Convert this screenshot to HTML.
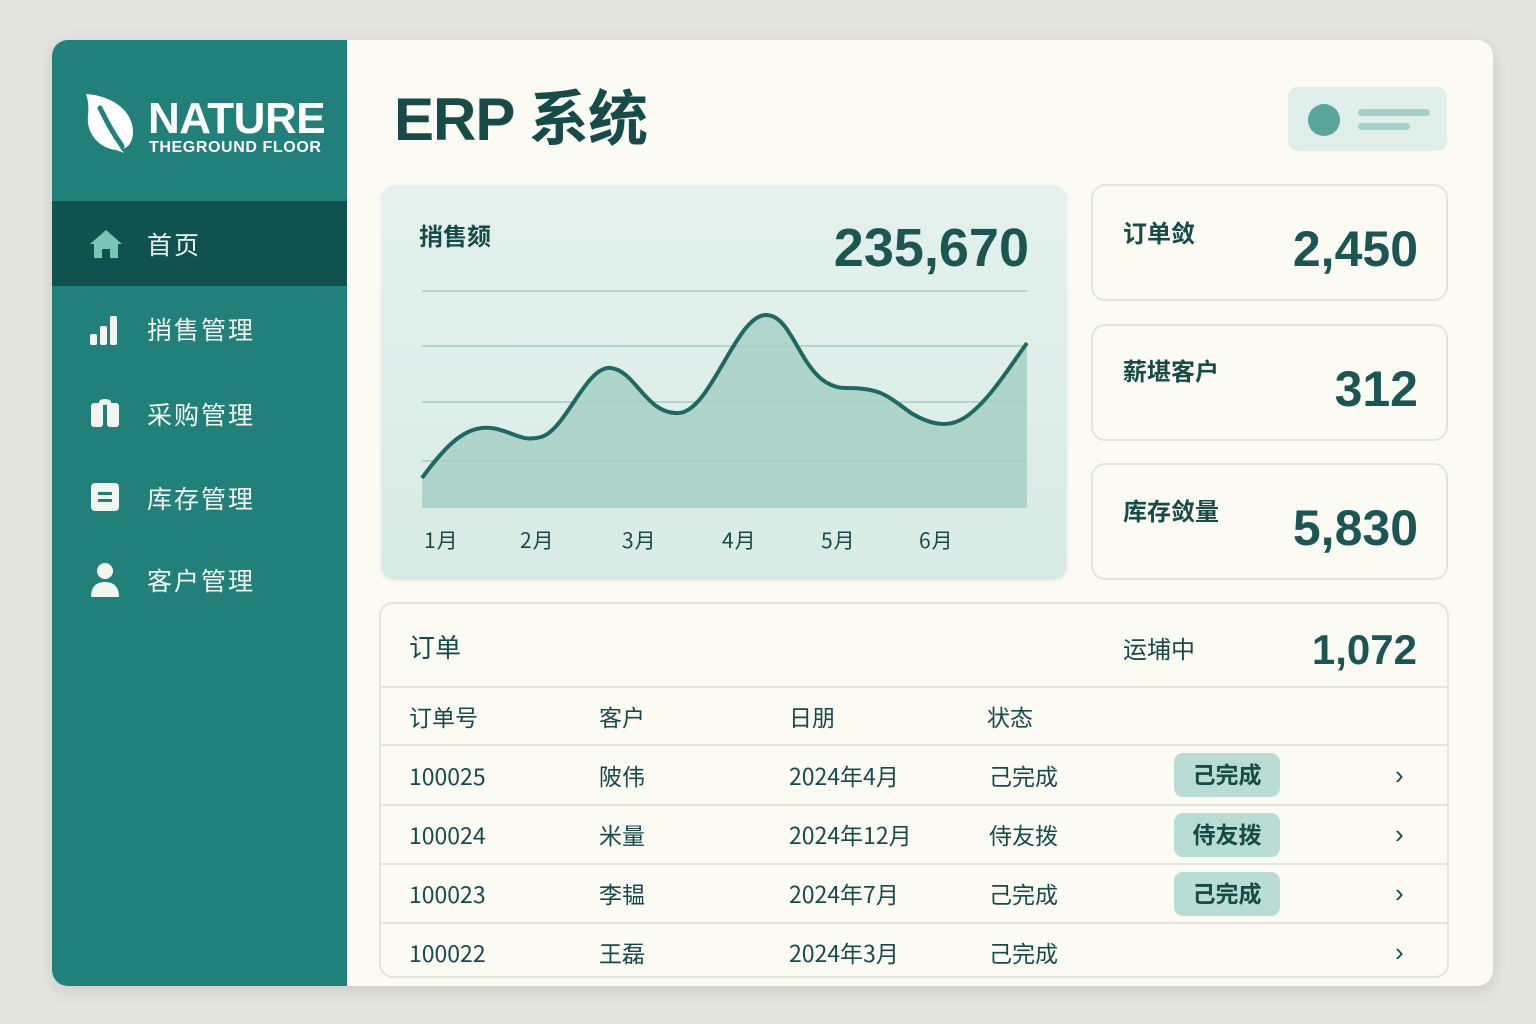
<!DOCTYPE html>
<html><head><meta charset="utf-8">
<style>
*{margin:0;padding:0;box-sizing:border-box}
body{width:1536px;height:1024px;background:#e5e5df;font-family:"Liberation Sans","Noto Sans CJK SC",sans-serif;position:relative;overflow:hidden;color:#174b48}
.abs{position:absolute}
.win{left:52px;top:40px;width:1441px;height:946px;background:#fbfbf4;border-radius:16px;overflow:hidden;box-shadow:0 4px 16px rgba(0,0,0,.12)}
.side{left:0;top:0;width:295px;height:946px;background:#22807a}
.act{left:0;top:161px;width:295px;height:85px;background:#10524f}
.nav{left:95px;font-size:25px;color:#f3f5ef;letter-spacing:2px}
.card{background:#fbfbf4;border:2px solid #e3e6de;border-radius:14px}
.lbl{font-size:24px;font-weight:bold;color:#174b48}
.big{font-weight:bold;color:#1c5653}
.td{font-size:23px;color:#174b48;font-family:"Noto Sans CJK SC",sans-serif;line-height:30px}
.line{height:2px;background:#e4e7df;left:0;width:1068px}
.badge{width:106px;height:44px;background:#b9dcd5;border-radius:9px;font-size:23px;text-align:center;line-height:44px;font-weight:bold;color:#174b48}
.chev{font-size:26px;color:#174b48}
</style></head><body>
<div class="abs win">
  <div class="abs side">
    <svg class="abs" style="left:32px;top:52px" width="52" height="62" viewBox="0 0 52 62">
      <path d="M2 2 C30 4 50 20 49 42 C48 52 42 58 36 56 L40 61 L32 58 C14 56 2 40 4 24 C5 14 4 8 2 2Z" fill="#fff"/>
      <path d="M16 16 C22 28 28 40 38 54" stroke="#22807a" stroke-width="5" fill="none" stroke-linecap="round"/>
    </svg>
    <div class="abs" style="left:96px;top:54px;font-size:44px;font-weight:bold;color:#fff;letter-spacing:-0.5px">NATURE</div>
    <div class="abs" style="left:97px;top:99px;font-size:16px;font-weight:bold;color:#fff;letter-spacing:0.6px">THEGROUND FLOOR</div>
    <div class="abs act"></div>
    <svg class="abs" style="left:36px;top:188px" width="36" height="32" viewBox="0 0 36 32"><path d="M18 2 L34 16 L30 16 L30 30 L22 30 L22 21 L14 21 L14 30 L6 30 L6 16 L2 16Z" fill="#7cc4b4"/></svg>
    <div class="abs nav" style="top:186px">首页</div>
    <svg class="abs" style="left:37px;top:274px" width="30" height="32" viewBox="0 0 30 32"><rect x="1" y="20" width="7" height="11" rx="2" fill="#f3f5ef"/><rect x="11" y="12" width="7" height="19" rx="2" fill="#f3f5ef"/><rect x="21" y="2" width="7" height="29" rx="2" fill="#f3f5ef"/></svg>
    <div class="abs nav" style="top:271px">捎售管理</div>
    <svg class="abs" style="left:38px;top:358px" width="30" height="30" viewBox="0 0 30 30"><rect x="1" y="5" width="12" height="24" rx="3" fill="#f3f5ef"/><rect x="17" y="5" width="12" height="24" rx="3" fill="#f3f5ef"/><ellipse cx="15" cy="4" rx="6" ry="3" fill="#f3f5ef"/></svg>
    <div class="abs nav" style="top:356px">采购管理</div>
    <svg class="abs" style="left:38px;top:442px" width="30" height="30" viewBox="0 0 30 30"><rect x="1" y="1" width="28" height="28" rx="4" fill="#f3f5ef"/><rect x="8" y="10" width="14" height="3" fill="#22807a"/><rect x="8" y="17" width="14" height="3" fill="#22807a"/></svg>
    <div class="abs nav" style="top:440px">库存管理</div>
    <svg class="abs" style="left:38px;top:522px" width="30" height="36" viewBox="0 0 30 36"><circle cx="15" cy="9" r="8" fill="#f3f5ef"/><path d="M1 35 C1 24 7 20 15 20 C23 20 29 24 29 35Z" fill="#f3f5ef"/></svg>
    <div class="abs nav" style="top:522px">客户管理</div>
  </div>

  <div class="abs" style="left:342px;top:40px;font-size:60px;font-weight:bold;color:#174b48;letter-spacing:-1px;line-height:80px">ERP 系统</div>
  <div class="abs" style="left:1236px;top:47px;width:159px;height:64px;background:#e0efea;border-radius:10px">
    <div class="abs" style="left:20px;top:17px;width:32px;height:32px;border-radius:50%;background:#5aa69c"></div>
    <div class="abs" style="left:70px;top:22px;width:72px;height:7px;border-radius:4px;background:#a3d3c8"></div>
    <div class="abs" style="left:70px;top:36px;width:52px;height:7px;border-radius:4px;background:#a3d3c8"></div>
  </div>

  <div class="abs" style="left:329px;top:145px;width:686px;height:395px;border-radius:14px;background:linear-gradient(#e4f1ed,#d9ebe5);box-shadow:0 1px 4px rgba(0,0,0,.06)">
    <div class="abs lbl" style="left:38px;top:32px">捎售颏</div>
    <div class="abs big" style="right:38px;top:32px;font-size:54px">235,670</div>
    <svg class="abs" style="left:0;top:0" width="686" height="395" viewBox="0 0 686 395">
      <g stroke="#a9cbc4" stroke-width="1.5"><line x1="41" y1="106" x2="646" y2="106"/><line x1="41" y1="161" x2="646" y2="161"/><line x1="41" y1="217" x2="646" y2="217"/><line x1="41" y1="276" x2="646" y2="276"/></g>
      <path d="M41 293 C65 260 85 240 110 243 C130 245 140 258 160 252 C185 245 205 180 230 183 C255 186 265 230 298 228 C330 226 355 130 385 130 C415 130 420 203 465 203 C500 203 505 210 530 228 C550 240 570 245 590 228 C610 212 630 180 646 158 L646 323 L41 323Z" fill="#a7d0c6" opacity=".85"/>
      <path d="M41 293 C65 260 85 240 110 243 C130 245 140 258 160 252 C185 245 205 180 230 183 C255 186 265 230 298 228 C330 226 355 130 385 130 C415 130 420 203 465 203 C500 203 505 210 530 228 C550 240 570 245 590 228 C610 212 630 180 646 158" stroke="#1f6964" stroke-width="4" fill="none"/>
    </svg>
    <div class="abs td" style="left:43px;top:340px;font-size:21px;letter-spacing:1px">1月</div>
    <div class="abs td" style="left:139px;top:340px;font-size:21px;letter-spacing:1px">2月</div>
    <div class="abs td" style="left:241px;top:340px;font-size:21px;letter-spacing:1px">3月</div>
    <div class="abs td" style="left:341px;top:340px;font-size:21px;letter-spacing:1px">4月</div>
    <div class="abs td" style="left:440px;top:340px;font-size:21px;letter-spacing:1px">5月</div>
    <div class="abs td" style="left:538px;top:340px;font-size:21px;letter-spacing:1px">6月</div>
  </div>

  <div class="abs card" style="left:1039px;top:144px;width:357px;height:117px">
    <div class="abs lbl" style="left:30px;top:28px">订单敛</div>
    <div class="abs big" style="right:28px;top:34px;font-size:50px">2,450</div>
  </div>
  <div class="abs card" style="left:1039px;top:284px;width:357px;height:117px">
    <div class="abs lbl" style="left:30px;top:26px">薪堪客户</div>
    <div class="abs big" style="right:28px;top:34px;font-size:50px">312</div>
  </div>
  <div class="abs card" style="left:1039px;top:423px;width:357px;height:117px">
    <div class="abs lbl" style="left:30px;top:27px">库存敛量</div>
    <div class="abs big" style="right:28px;top:34px;font-size:50px">5,830</div>
  </div>

  <div class="abs card" style="left:327px;top:562px;width:1070px;height:376px;overflow:hidden">
    <div class="abs lbl" style="left:28px;top:24px;font-weight:normal;font-size:26px">订单</div>
    <div class="abs lbl" style="left:742px;top:26px;font-weight:normal">运埔中</div>
    <div class="abs big" style="right:30px;top:22px;font-size:42px">1,072</div>
    <div class="abs line" style="top:82px"></div>
    <div class="abs td" style="left:28px;top:97px">订单号</div>
    <div class="abs td" style="left:218px;top:97px">客户</div>
    <div class="abs td" style="left:408px;top:97px">日朋</div>
    <div class="abs td" style="left:606px;top:97px">状态</div>
    <div class="abs line" style="top:140px"></div>
    <div class="abs td" style="left:28px;top:156px">100025</div><div class="abs td" style="left:218px;top:156px">陂伟</div><div class="abs td" style="left:408px;top:156px">2024年4月</div><div class="abs td" style="left:608px;top:156px">己完成</div>
    <div class="abs badge" style="left:793px;top:149px">己完成</div><div class="abs chev" style="left:1014px;top:156px">›</div>
    <div class="abs line" style="top:200px"></div>
    <div class="abs td" style="left:28px;top:215px">100024</div><div class="abs td" style="left:218px;top:215px">米量</div><div class="abs td" style="left:408px;top:215px">2024年12月</div><div class="abs td" style="left:608px;top:215px">侍友拨</div>
    <div class="abs badge" style="left:793px;top:209px">侍友拨</div><div class="abs chev" style="left:1014px;top:215px">›</div>
    <div class="abs line" style="top:259px"></div>
    <div class="abs td" style="left:28px;top:274px">100023</div><div class="abs td" style="left:218px;top:274px">李韫</div><div class="abs td" style="left:408px;top:274px">2024年7月</div><div class="abs td" style="left:608px;top:274px">己完成</div>
    <div class="abs badge" style="left:793px;top:268px">己完成</div><div class="abs chev" style="left:1014px;top:274px">›</div>
    <div class="abs line" style="top:318px"></div>
    <div class="abs td" style="left:28px;top:333px">100022</div><div class="abs td" style="left:218px;top:333px">王磊</div><div class="abs td" style="left:408px;top:333px">2024年3月</div><div class="abs td" style="left:608px;top:333px">己完成</div>
    <div class="abs chev" style="left:1014px;top:333px">›</div>
  </div>
</div>
</body></html>
